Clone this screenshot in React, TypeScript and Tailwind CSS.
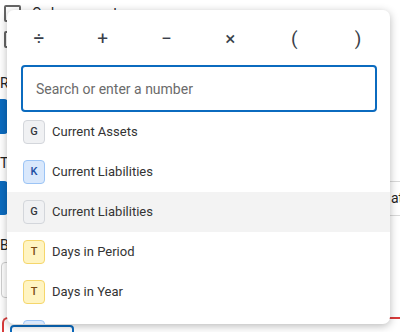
import React from "react";

type Item = { tag: "G" | "K" | "T"; name: string; active?: boolean };

const items: Item[] = [
  { tag: "G", name: "Current Assets" },
  { tag: "K", name: "Current Liabilities" },
  { tag: "G", name: "Current Liabilities", active: true },
  { tag: "T", name: "Days in Period" },
  { tag: "T", name: "Days in Year" },
  { tag: "K", name: "Debt" },
];

const operators = ["÷", "+", "−", "×", "(", ")"];

function Badge({ tag }: { tag: Item["tag"] }) {
  const styles = {
    G: "bg-[#f0f1f3] border-[#d3d6db] text-[#33373d]",
    K: "bg-[#d9e8fc] border-[#9cc4f5] text-[#1d4fa3]",
    T: "bg-[#fff4c2] border-[#f5d66b] text-[#7a4a12]",
  };
  return (
    <div
      className={`w-[22px] h-[24px] shrink-0 rounded-[4px] border flex items-center justify-center text-[11px] font-medium ${styles[tag]}`}
    >
      {tag}
    </div>
  );
}

export default function App() {
  return (
    <div className="relative w-[400px] h-[332px] overflow-hidden bg-white font-['Roboto',sans-serif] text-[#222]">
      {/* Page behind the popover */}
      <div className="flex flex-col">
        <div className="flex items-center gap-[11px] pl-[4px] pt-[5px] h-[22px]">
          <div className="w-[17px] h-[17px] border-2 border-[#666] rounded-[2px]" />
          <span className="text-[14px] leading-[17px]">Order amount</span>
        </div>
        <div className="flex items-center gap-[11px] pl-[4px] pt-[9px] h-[26px]">
          <div className="w-[17px] h-[17px] border-2 border-[#666] rounded-[2px]" />
          <span className="text-[14px] leading-[17px]">Show totals</span>
        </div>
        <div className="text-[14px] mt-[27px] leading-[16px]">Ratio</div>
        <div className="mt-[8px] w-[8px] h-[35px] bg-[#0b6bbf] rounded-r-[4px]" />
        <div className="text-[14px] mt-[21px] leading-[16px]">Type</div>
        <div className="mt-[10px] flex items-center h-[34px]">
          <div className="w-[8px] h-[34px] bg-[#0b6bbf] rounded-r-[4px]" />
          <div className="ml-auto w-[30px] h-[35px] border-y border-[#d9d9d9] flex items-center text-[14px] pl-[21px] overflow-hidden whitespace-nowrap">
            at
          </div>
        </div>
        <div className="text-[14px] mt-[22px] leading-[16px]">Base</div>
        <div className="mt-[9px] ml-[1px] w-[40px] h-[36px] border border-[#cfcfcf] rounded-[4px]" />
        <div className="mt-[19px] ml-[2px] h-[40px] border-t-2 border-l-2 border-[#d83b3b] rounded-tl-[6px] pl-[6px] pt-[6px]">
          <div className="w-[64px] h-[30px] border-2 border-[#0b6bbf] rounded-[4px]" />
        </div>
      </div>

      {/* Formula popover */}
      <div className="absolute left-[7px] top-[10px] w-[383px] h-[314px] bg-white rounded-[7px] shadow-[0_2px_8px_rgba(0,0,0,0.28)] overflow-hidden">
        <div className="grid grid-cols-6 pt-[17px] h-[41px]">
          {operators.map((op, i) => (
            <div
              key={i}
              className="h-[24px] flex items-center justify-center text-[19px] text-[#3a3f4a]"
            >
              {op}
            </div>
          ))}
        </div>
        <div className="mt-[14px] ml-[14px] w-[356px] h-[47px] border-2 border-[#0b6bbf] rounded-[4px] flex items-center pl-[13px] pt-[2px]">
          <span className="text-[14px] text-[#6b6b6b]">Search or enter a number</span>
        </div>
        <div className="flex flex-col">
          {items.map((item, i) => (
            <div
              key={i}
              className={`h-[40px] flex items-center gap-[7px] pl-[16px] ${item.active ? "bg-[#f3f3f3]" : ""}`}
            >
              <Badge tag={item.tag} />
              <span className="text-[13px] text-[#333]">{item.name}</span>
            </div>
          ))}
        </div>
      </div>
    </div>
  );
}
